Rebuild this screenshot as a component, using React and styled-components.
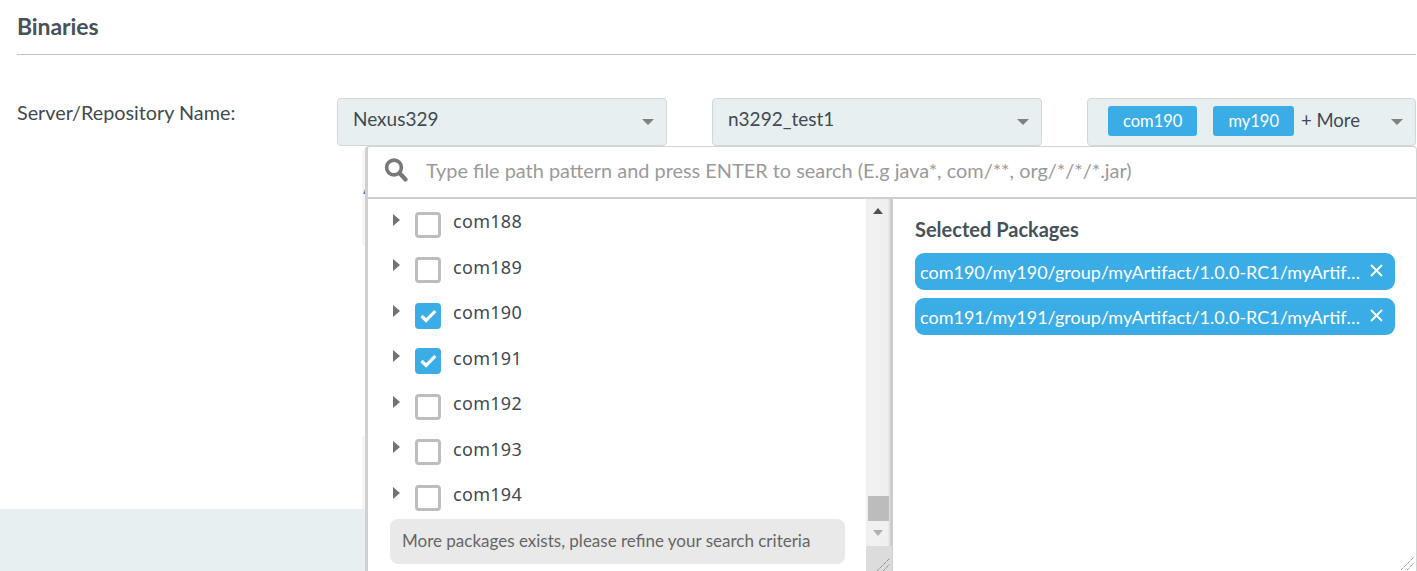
import React from 'react'
import styled, { createGlobalStyle } from 'styled-components'

const FONT = `"Lato", "Noto Sans", "Liberation Sans", sans-serif`
const LIST_FONT = `"Noto Sans", "Liberation Sans", sans-serif`
const BLUE = '#3badE6'

const packages = [
    { name: 'com188', checked: false },
    { name: 'com189', checked: false },
    { name: 'com190', checked: true },
    { name: 'com191', checked: true },
    { name: 'com192', checked: false },
    { name: 'com193', checked: false },
    { name: 'com194', checked: false },
]

const selected = [
    'com190/my190/group/myArtifact/1.0.0-RC1/myArtifact-1.0.0-RC1.jar',
    'com191/my191/group/myArtifact/1.0.0-RC1/myArtifact-1.0.0-RC1.jar',
]

const Grip = ({ className }) => (
    <svg className={className} width="13" height="13" viewBox="0 0 13 13" stroke="#666" strokeWidth="1" strokeDasharray="1 1" fill="none">
        <path d="M0 13L13 0M6 13l7-7" />
    </svg>
)

const App = () => {
    return (
        <Page>
            <GlobalStyle />
            <Heading>Binaries</Heading>
            <FormRow>
                <FieldLabel>Server/Repository Name:</FieldLabel>
                <Select>
                    <SelectValue>Nexus329</SelectValue>
                    <SelectCaret />
                </Select>
                <Select>
                    <SelectValue>n3292_test1</SelectValue>
                    <SelectCaret />
                </Select>
                <Select tags>
                    <Tag>com190</Tag>
                    <Tag>my190</Tag>
                    <MoreText>+ More</MoreText>
                    <SelectCaret />
                </Select>
            </FormRow>

            <BehindCard top={150} height={95}><BehindLink>A</BehindLink></BehindCard>
            <BehindCard top={436} height={73} />

            <Dropdown>
                <SearchBar>
                    <svg width="24" height="26" viewBox="0 0 24 26" fill="none" stroke="#77787a" strokeWidth="3.6">
                        <circle cx="10" cy="10.5" r="7.4" />
                        <path d="M15.5 16l6 6.5" strokeWidth="4.2" strokeLinecap="round" />
                    </svg>
                    <SearchHint>Type file path pattern and press ENTER to search (E.g java*, com/**, org/*/*/*.jar)</SearchHint>
                </SearchBar>
                <DropdownBody>
                    <TreePane>
                        <TreeList>
                            {packages.map(item => (
                                <TreeRow key={item.name}>
                                    <Arrow />
                                    <CheckBox checked={item.checked}>
                                        {item.checked && (
                                            <svg width="17" height="14" viewBox="0 0 17 14" fill="none" stroke="#fff" strokeWidth="3.2">
                                                <path d="M1.5 7l4.6 4.4 9.2-9.4" />
                                            </svg>
                                        )}
                                    </CheckBox>
                                    <PackageName>{item.name}</PackageName>
                                </TreeRow>
                            ))}
                        </TreeList>
                        <Notice>More packages exists, please refine your search criteria</Notice>
                    </TreePane>
                    <ScrollBar>
                        <ScrollArrowUp />
                        <ScrollThumb />
                        <ScrollArrowDown />
                        <ScrollCorner><CornerGrip /></ScrollCorner>
                    </ScrollBar>
                    <SelectedPane>
                        <SelectedTitle>Selected Packages</SelectedTitle>
                        {selected.map(path => (
                            <SelectedChip key={path}>
                                <ChipText>{path}</ChipText>
                                <ChipClose width="13" height="13" viewBox="0 0 13 13" stroke="#fff" strokeWidth="1.8">
                                    <path d="M1 1l11 11M12 1L1 12" />
                                </ChipClose>
                            </SelectedChip>
                        ))}
                        <PaneGrip />
                    </SelectedPane>
                </DropdownBody>
            </Dropdown>
            <FooterBand />
        </Page>
    )
}

export default App

const GlobalStyle = createGlobalStyle`
    html, body {
        margin: 0;
        padding: 0;
        background: #fff;
        overflow: hidden;
    }
    * {
        box-sizing: border-box;
    }
`

const Page = styled.div`
    position: relative;
    width: 1417px;
    height: 571px;
    padding: 0 1px 0 17px;
    font-family: ${FONT};
    color: #3f4a52;
    overflow: hidden;
`
const Heading = styled.h2`
    margin: 0;
    height: 55px;
    padding-top: 11px;
    font-size: 23px;
    line-height: 30px;
    font-weight: 700;
    letter-spacing: -0.1px;
    color: #46525a;
    border-bottom: 1px solid #c4c4c4;
`
const FormRow = styled.div`
    display: grid;
    grid-template-columns: 275px 330px 330px 329px;
    column-gap: 45px;
    margin-top: 43px;
    align-items: start;
`
const FieldLabel = styled.label`
    font-size: 19.8px;
    line-height: 28px;
    color: #3f4a52;
    white-space: nowrap;
`
const Select = styled.div`
    position: relative;
    display: flex;
    align-items: center;
    gap: 15px;
    width: 100%;
    height: 48px;
    padding: 0 0 2px ${props => (props.tags ? '20px' : '15px')};
    background: #e8eff1;
    border: 1px solid #d3d6d8;
    border-radius: 4px;
`
const SelectValue = styled.span`
    font-size: 19px;
    margin-bottom: 5px;
`
const SelectCaret = styled.span`
    position: absolute;
    right: 12px;
    top: 20px;
    border-style: solid;
    border-width: 6px 6px 0;
    border-color: #808080 transparent transparent;
`
const Tag = styled.span`
    display: inline-flex;
    align-items: center;
    justify-content: center;
    height: 30px;
    padding: 0 15px;
    font-size: 16.5px;
    color: #fff;
    background: ${BLUE};
    border-radius: 3px;
    & + & {
        margin-left: 1px;
    }
`
const MoreText = styled.span`
    font-size: 18.5px;
    margin: 0 0 2px -8px;
`
const BehindCard = styled.div`
    position: absolute;
    left: 362px;
    top: ${props => props.top}px;
    width: 10px;
    height: ${props => props.height}px;
    background: #f6f6f6;
`
const BehindLink = styled.span`
    position: absolute;
    left: 1px;
    top: 24px;
    font-size: 20px;
    line-height: 24px;
    color: #3f7fb5;
`
const Dropdown = styled.div`
    position: absolute;
    z-index: 2;
    left: 365px;
    top: 146px;
    width: 1052px;
    height: 430px;
    display: flex;
    flex-direction: column;
    background: #fff;
    border-left: 3px solid #d0d0d0;
    border-top: 1px solid #d3d3d3;
    border-right: 1px solid #d3d3d3;
    border-radius: 4px 4px 0 0;
`
const SearchBar = styled.div`
    display: flex;
    align-items: center;
    flex: 0 0 52px;
    padding: 0 0 4px 16px;
    gap: 18px;
    border-bottom: 2px solid #cfcfcf;
`
const SearchHint = styled.span`
    font-size: 19.9px;
    color: #9a9a9a;
    white-space: nowrap;
`
const DropdownBody = styled.div`
    display: flex;
    flex: 1;
    min-height: 0;
`
const TreePane = styled.div`
    width: 498px;
    padding: 0 21px 0 22px;
`
const TreeList = styled.ul`
    list-style: none;
    margin: 0;
    padding: 0;
`
const TreeRow = styled.li`
    position: relative;
    display: flex;
    align-items: flex-start;
    height: 45.5px;
    padding-top: 8px;
`
const Arrow = styled.span`
    margin: 6.5px 15px 0 3px;
    border-style: solid;
    border-width: 6px 0 6px 7px;
    border-color: transparent transparent transparent #6f7475;
`
const CheckBox = styled.span`
    display: inline-flex;
    align-items: center;
    justify-content: center;
    width: 26px;
    height: 26px;
    margin-top: 4.5px;
    border-radius: 4px;
    border: ${props => (props.checked ? 'none' : '3px solid #bdbdbd')};
    background: ${props => (props.checked ? BLUE : '#fff')};
`
const PackageName = styled.span`
    margin-left: 12px;
    font-family: ${LIST_FONT};
    font-size: 18px;
    line-height: 28px;
    letter-spacing: 0.3px;
    color: #3f4a52;
`
const Notice = styled.div`
    height: 45px;
    margin-top: 1px;
    padding: 0 12px 1px;
    display: flex;
    align-items: center;
    font-size: 17px;
    color: #666;
    background: #e9e9e9;
    border-radius: 8px;
`
const ScrollBar = styled.div`
    position: relative;
    flex: 0 0 26px;
    background: #f0f0f0;
    box-shadow: inset -4px 0 3px -2px rgba(0, 0, 0, 0.2);
`
const ScrollArrowUp = styled.span`
    position: absolute;
    top: 9px;
    left: 7px;
    border-style: solid;
    border-width: 0 5px 6px;
    border-color: transparent transparent #505050;
`
const ScrollThumb = styled.span`
    position: absolute;
    top: 297px;
    left: 2px;
    width: 21px;
    height: 25px;
    background: #bcbcbc;
`
const ScrollArrowDown = styled.span`
    position: absolute;
    top: 331px;
    left: 7px;
    border-style: solid;
    border-width: 6px 5px 0;
    border-color: #b0b0b0 transparent transparent;
`
const ScrollCorner = styled.span`
    position: absolute;
    top: 347px;
    left: 0;
    right: 0;
    height: 30px;
    background: #dcdcdc;
`
const CornerGrip = styled(Grip)`
    position: absolute;
    left: 11px;
    top: 12px;
`
const SelectedPane = styled.div`
    position: relative;
    flex: 1;
    min-width: 0;
    padding: 15px 21px 0 22px;
    border-left: 1px solid #cfcfcf;
`
const SelectedTitle = styled.h4`
    margin: 0 0 9px;
    font-size: 20px;
    line-height: 30px;
    font-weight: 700;
    color: #46525a;
`
const SelectedChip = styled.div`
    display: flex;
    align-items: center;
    gap: 7px;
    height: 37px;
    margin-bottom: 8px;
    padding: 0 12px 0 5px;
    color: #fff;
    background: ${BLUE};
    border-radius: 9px;
`
const ChipText = styled.span`
    flex: 1;
    min-width: 0;
    font-size: 18px;
    white-space: nowrap;
    overflow: hidden;
    text-overflow: ellipsis;
`
const ChipClose = styled.svg`
    flex: none;
    margin-bottom: 3px;
`
const PaneGrip = styled(Grip)`
    position: absolute;
    right: 2px;
    top: 358px;
`
const FooterBand = styled.div`
    position: absolute;
    left: 0;
    right: 0;
    bottom: 0;
    height: 62px;
    background: #e8eff1;
`
